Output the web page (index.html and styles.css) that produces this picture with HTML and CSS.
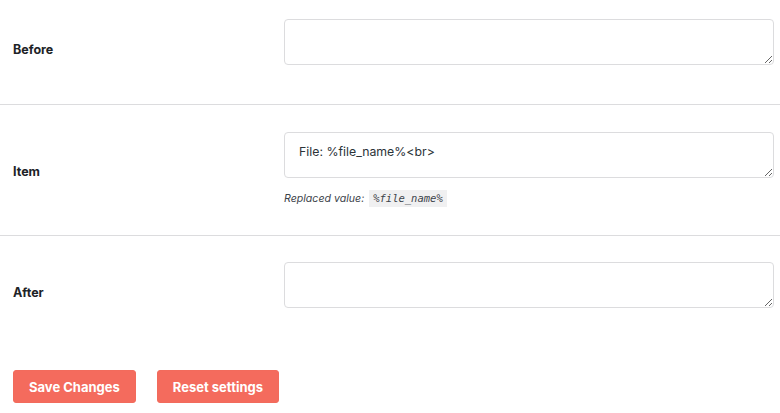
FILE: index.html
```html
<!DOCTYPE html>
<html lang="en">
<head>
<meta charset="utf-8">
<title>Settings</title>
<link rel="stylesheet" href="styles.css">
</head>
<body>
<form class="settings">
  <div class="row">
    <div class="label">Before</div>
    <div class="field">
      <textarea class="input"></textarea>
    </div>
  </div>
  <div class="row row--desc">
    <div class="label">Item</div>
    <div class="field">
      <textarea class="input">File: %file_name%&lt;br&gt;</textarea>
      <p class="desc">Replaced value: <code class="code">%file_name%</code></p>
    </div>
  </div>
  <div class="row row--last">
    <div class="label">After</div>
    <div class="field">
      <textarea class="input"></textarea>
    </div>
  </div>
  <div class="actions">
    <button type="button" class="btn">Save Changes</button>
    <button type="button" class="btn">Reset settings</button>
  </div>
</form>
</body>
</html>
```
FILE: styles.css
```css
html, body {
  margin: 0;
  padding: 0;
  background: #fff;
}
body {
  font-family: Inter, "Noto Sans", sans-serif;
  color: #1d2327;
}
.settings {
  margin-top: -7px;
}
.row {
  display: grid;
  grid-template-columns: 271px 1fr;
  align-items: center;
  padding: 0 6px 0 13px;
  border-bottom: 1px solid #dcdcde;
}
.row--last {
  border-bottom: none;
}
.label {
  font-size: 12.5px;
  font-weight: 700;
  color: #1d2327;
  padding-top: 2px;
}
.field {
  padding: 26px 0 39px;
}
.row--desc .field {
  padding: 27px 0 26px;
}
.input {
  display: block;
  box-sizing: border-box;
  width: 100%;
  height: 46px;
  margin: 0;
  padding: 10px 14px;
  border: 1px solid #dcdcde;
  border-radius: 4px;
  font-family: Inter, "Noto Sans", sans-serif;
  font-size: 12.3px;
  line-height: 18px;
  color: #2c3338;
  background: #fff;
  resize: vertical;
  outline: none;
}
.desc {
  margin: 11px 0 0;
  font-size: 10.6px;
  line-height: 20px;
  font-style: italic;
  color: #3c434a;
}
.code {
  display: inline-block;
  margin-left: 2px;
  padding: 0 4px;
  line-height: 17px;
  background: #f0f0f1;
  font-family: "DejaVu Sans Mono", "Liberation Mono", monospace;
  font-size: 10.5px;
  font-style: italic;
  color: #3c434a;
}
.actions {
  display: flex;
  gap: 21px;
  padding: 23px 13px 10px;
}
.btn {
  height: 33px;
  padding: 0 15px;
  border: 1px solid #f26b5c;
  border-radius: 3px;
  background: #f46b5d;
  color: #fff;
  font-family: Inter, "Noto Sans", sans-serif;
  font-size: 13px;
  font-weight: 700;
  cursor: pointer;
}
```
